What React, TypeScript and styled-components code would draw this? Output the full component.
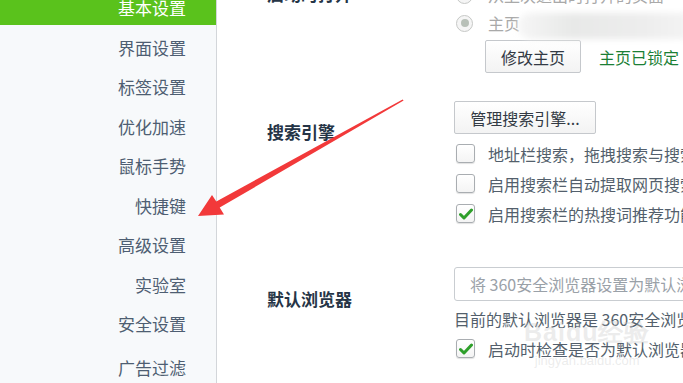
import styled, { createGlobalStyle } from "styled-components";

const GlobalStyle = createGlobalStyle`
	html, body {
		margin: 0;
		padding: 0;
		background: #ffffff;
	}
	body {
		font-family: "Noto Sans CJK SC", "Liberation Sans", sans-serif;
	}
`;

const Page = styled.div`
	position: relative;
	display: flex;
	width: 683px;
	height: 383px;
	overflow: hidden;
	background: #ffffff;
`;

const Sidebar = styled.nav`
	flex: 0 0 216px;
	height: 100%;
	background: #f7f9fb;
	border-right: 1px solid #d3d6da;
	overflow: hidden;
`;

const NavList = styled.ul`
	list-style: none;
	margin: -9px 0 0;
	padding: 0;
`;

const NavItem = styled.li<{ $active?: boolean; $mt?: number }>`
	height: 34px;
	margin-bottom: 5.5px;
	margin-top: ${(p) => p.$mt ?? 0}px;
	padding-right: 30px;
	display: flex;
	align-items: center;
	justify-content: flex-end;
	font-size: 17px;
	line-height: 22px;
	color: ${(p) => (p.$active ? "#ffffff" : "#4e5e72")};
	background: ${(p) => (p.$active ? "#5ac21c" : "transparent")};
`;

const Main = styled.main`
	flex: 1;
	min-width: 0;
	padding-left: 50px;
	margin-top: -19px;
	overflow: hidden;
`;

const Section = styled.section<{ $mt?: number }>`
	display: grid;
	grid-template-columns: 187px 1fr;
	margin-top: ${(p) => p.$mt ?? 0}px;
`;

const Label = styled.div<{ $pt: number }>`
	padding-top: ${(p) => p.$pt}px;
	font-size: 17px;
	line-height: 22px;
	font-weight: 700;
	color: #253446;
	white-space: nowrap;
`;

const Controls = styled.div`
	display: flex;
	flex-direction: column;
	min-width: 0;
	white-space: nowrap;
`;

const Row = styled.div<{ $h?: number; $mt?: number }>`
	display: flex;
	align-items: center;
	height: ${(p) => p.$h ?? 30}px;
	margin-top: ${(p) => p.$mt ?? 0}px;
	font-size: 16px;
	color: #535f6c;
`;

const Radio = styled.span`
	position: relative;
	flex: 0 0 auto;
	width: 15px;
	height: 15px;
	margin-left: 2px;
	margin-right: 15px;
	border-radius: 50%;
	border: 1px solid #c6c8c6;
	background: #f5f5f5;
	&::after {
		content: "";
		position: absolute;
		left: 3.5px;
		top: 3.5px;
		width: 8px;
		height: 8px;
		border-radius: 50%;
		background: #b8c0b8;
	}
`;

const RadioText = styled.span`
	color: #a9a9a9;
`;

const Button = styled.button<{ $w: number; $ml?: number }>`
	width: ${(p) => p.$w}px;
	height: 33px;
	margin-left: ${(p) => p.$ml ?? 0}px;
	padding: 0;
	border: 1px solid #c5c8cc;
	border-radius: 2px;
	background: linear-gradient(#ffffff, #f3f3f3);
	font-family: inherit;
	font-size: 16px;
	color: #333a44;
	flex: 0 0 auto;
`;

const LockedText = styled.span`
	margin-left: 18px;
	color: #1b7f35;
	font-size: 16px;
`;

const CheckBox = styled.span`
	flex: 0 0 auto;
	width: 17px;
	height: 17px;
	margin-left: 2px;
	margin-right: 13px;
	border: 1px solid #a9adb1;
	border-radius: 3px;
	background: linear-gradient(#ffffff, #f4f4f4);
	box-shadow: 0 1px 1px rgba(0, 0, 0, 0.12);
	display: flex;
	align-items: center;
	justify-content: center;
`;

const InputBox = styled.div`
	width: 320px;
	height: 32px;
	flex: 0 0 auto;
	border: 1px solid #c9cdd1;
	border-radius: 3px;
	padding-left: 15px;
	display: flex;
	align-items: center;
	font-size: 16px;
	color: #9aa1a8;
	box-sizing: content-box;
`;

const Smudge = styled.div`
	position: absolute;
	left: 518px;
	top: 13px;
	width: 180px;
	height: 26px;
	border-radius: 14px;
	background: linear-gradient(90deg, #f6f6f6, #e8e9e8 30%, #ededed 70%, #f5f5f5);
	filter: blur(3px);
`;

const Watermark = styled.div`
	position: absolute;
	left: 524px;
	top: 318px;
	display: flex;
	flex-direction: column;
	align-items: center;
	pointer-events: none;
	color: rgba(200, 200, 200, 0.35);
	font-family: "Liberation Sans", sans-serif;
`;

const WatermarkTitle = styled.span`
	font-size: 25px;
	font-weight: 700;
	line-height: 28px;
	letter-spacing: 1px;
`;

const WatermarkUrl = styled.span`
	margin-top: 8px;
	font-size: 13px;
	line-height: 14px;
`;

const ArrowLayer = styled.svg`
	position: absolute;
	left: 0;
	top: 0;
	pointer-events: none;
`;

const Check = () => (
	<svg width="14" height="12" viewBox="0 0 14 12">
		<path d="M1.5 6.5 L5 10 L12.5 2" fill="none" stroke="#2e9f2a" strokeWidth="3" strokeLinecap="round" strokeLinejoin="round" />
	</svg>
);

const navItems = ["基本设置", "界面设置", "标签设置", "优化加速", "鼠标手势", "快捷键", "高级设置", "实验室", "安全设置", "广告过滤"];

export default function App() {
	return (
		<>
			<GlobalStyle />
			<Page>
				<Sidebar>
					<NavList>
						{navItems.map((name, i) => (
							<NavItem key={name} $active={i === 0} $mt={i === navItems.length - 1 ? 10 : 0}>
								{name}
							</NavItem>
						))}
					</NavList>
				</Sidebar>

				<Main>
					<Section>
						<Label $pt={2}>启动时打开</Label>
						<Controls>
							<Row $h={28}>
								<Radio />
								<RadioText>从上次退出时打开的页面</RadioText>
							</Row>
							<Row $h={28}>
								<Radio />
								<RadioText>主页</RadioText>
							</Row>
							<Row $h={33} $mt={3}>
								<Button $w={96} $ml={31}>修改主页</Button>
								<LockedText>主页已锁定</LockedText>
							</Row>
						</Controls>
					</Section>

					<Section $mt={28}>
						<Label $pt={20}>搜索引擎</Label>
						<Controls>
							<Row $h={33}>
								<Button $w={142}>管理搜索引擎...</Button>
							</Row>
							<Row $mt={4.5}>
								<CheckBox />
								地址栏搜索，拖拽搜索与搜索框使用相同的搜索引擎
							</Row>
							<Row>
								<CheckBox />
								启用搜索栏自动提取网页搜索关键词
							</Row>
							<Row>
								<CheckBox>
									<Check />
								</CheckBox>
								启用搜索栏的热搜词推荐功能
							</Row>
						</Controls>
					</Section>

					<Section $mt={38.5}>
						<Label $pt={21}>默认浏览器</Label>
						<Controls>
							<InputBox>将 360安全浏览器设置为默认浏览器</InputBox>
							<Row $h={27} $mt={4}>
								目前的默认浏览器是 360安全浏览器
							</Row>
							<Row $mt={1.5}>
								<CheckBox>
									<Check />
								</CheckBox>
								启动时检查是否为默认浏览器
							</Row>
						</Controls>
					</Section>
				</Main>

				<Smudge />

				<Watermark>
					<WatermarkTitle>Baidu经验</WatermarkTitle>
					<WatermarkUrl>jingyan.baidu.com</WatermarkUrl>
				</Watermark>

				<ArrowLayer width="683" height="383" viewBox="0 0 683 383">
					<polygon
						points="198,216 212,195 216.3,201.5 402.6,99.5 403.6,100.6 219.7,207.5 224,214.5"
						fill="#f2393a"
					/>
				</ArrowLayer>
			</Page>
		</>
	);
}
